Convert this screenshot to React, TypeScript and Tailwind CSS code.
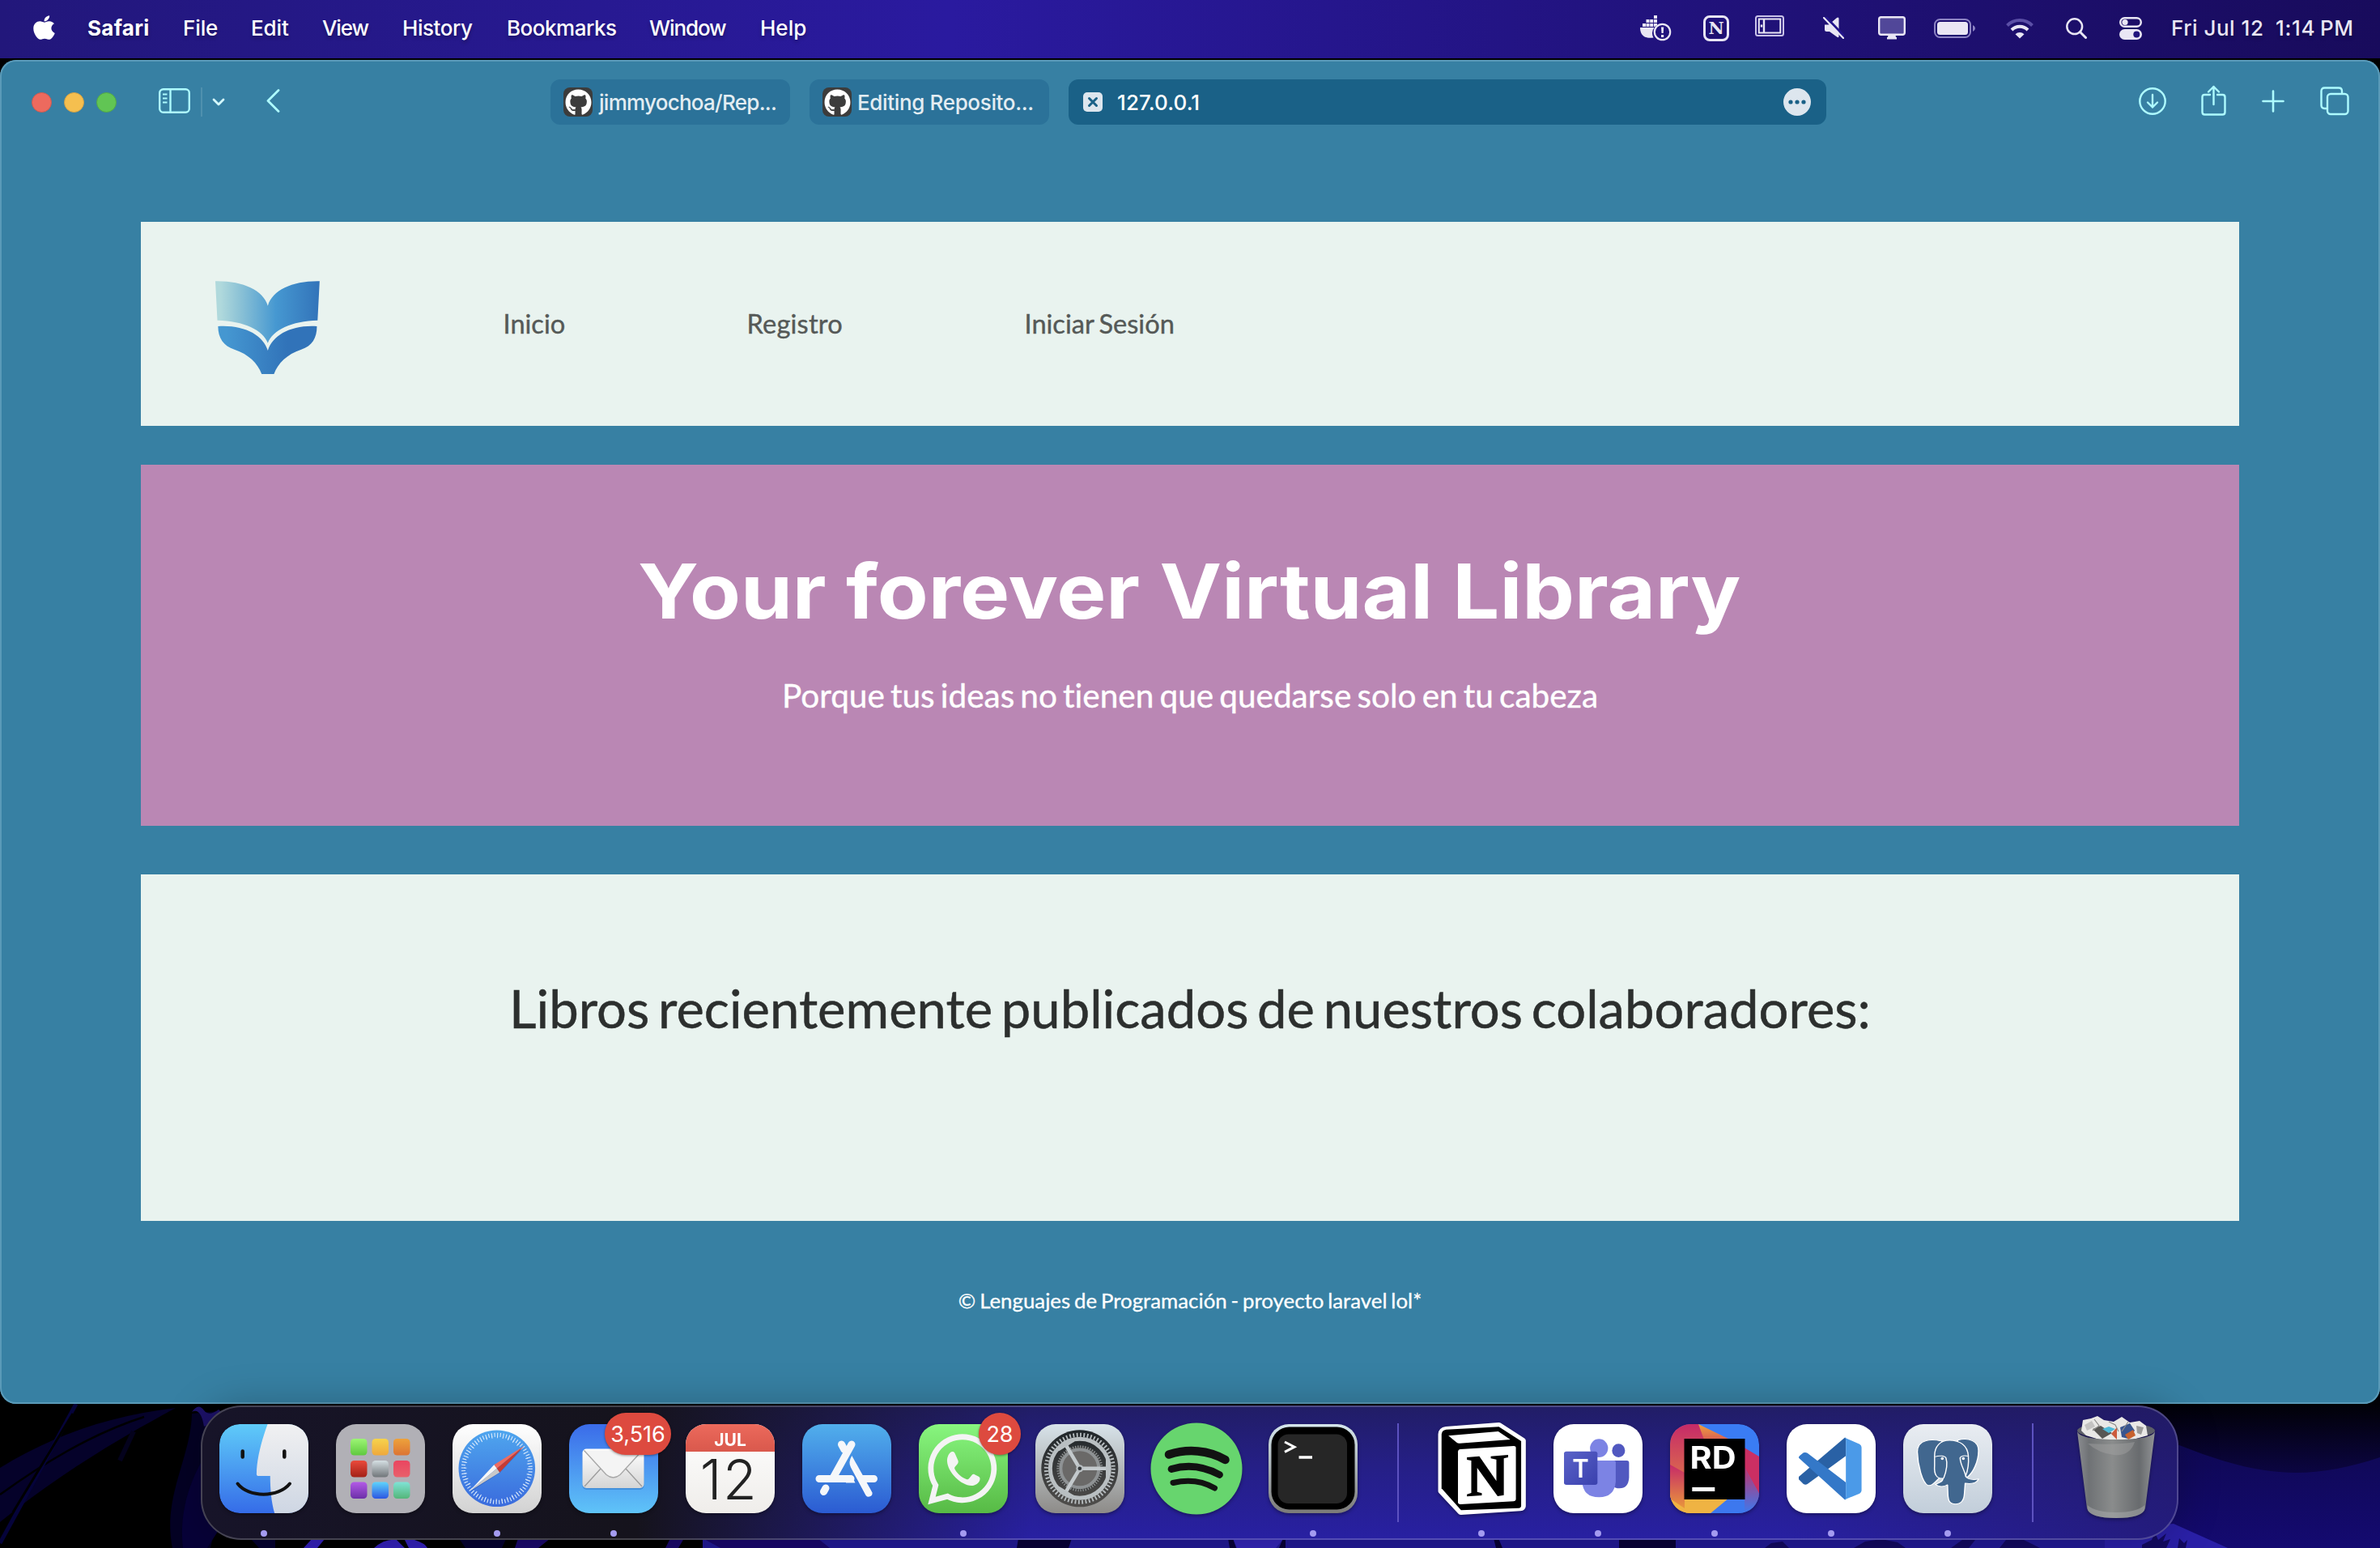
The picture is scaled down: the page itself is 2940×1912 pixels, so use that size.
import type { ReactNode } from 'react';
import { FaApple, FaGithub } from 'react-icons/fa';

/* ---------- Menu bar ---------- */

function DockerIcon() {
  return (
    <svg className="ml-0 h-[32px] w-[40px]" viewBox="0 0 40 32" fill="#e9e6f4">
      <path d="M17 0h4v4h-4zM7.500 5h4v4h-4zM12.200 5h4v4h-4zM17 5h4v4h-4zM3 10h4v4H3zM7.500 10h4v4h-4zM12.200 10h4v4h-4zM17 10h4v2l-3 2h-1z" />
      <path d="M0 15h17.500a11.500 11.500 0 0 0-1 12.500C6 29 0 25 0 15z" />
      <circle cx="27.500" cy="20.500" r="9.700" fill="none" stroke="#e9e6f4" strokeWidth="2.200" />
      <path d="M26 14.500h3.200l-.5 7.500h-2.200zM26 24h3.200v3H26z" />
    </svg>
  );
}

function NotionMark() {
  return (
    <span className="ml-[38px] flex h-[32px] w-[32px] items-center justify-center rounded-[8px] border-[3px] border-[#e9e6f4] font-['DejaVu_Serif','Liberation_Serif',serif] text-[21px] leading-[26px] font-bold text-[#e9e6f4]">
      N
    </span>
  );
}

function TabletIcon() {
  return (
    <svg className="mb-[6px] ml-[32px] h-[26px] w-[36px]" viewBox="0 0 36 26" fill="none">
      <rect x="1" y="1" width="34" height="24" rx="2.500" stroke="#c9c3e8" strokeWidth="2" />
      <rect x="4.800" y="4.500" width="26.500" height="17" stroke="#e9e6f4" strokeWidth="2" />
      <path d="M11 4v18M8 11.500v3" stroke="#e9e6f4" strokeWidth="2.400" />
    </svg>
  );
}

function MuteIcon() {
  return (
    <svg className="ml-[48px] h-[27px] w-[26px]" viewBox="0 0 26 27">
      <path d="M2 9.500h5L17 1q2.500-1.500 2.500 1v22q0 2-2.500.5L8 18H4.500Q2 18 2 15.500z" fill="#e9e6f4" />
      <path d="M2.500 -1l25 26" stroke="#23158c" strokeWidth="3" />
      <path d="M1 1l24 25" stroke="#e9e6f4" strokeWidth="2.200" strokeLinecap="round" />
    </svg>
  );
}

function DisplayIcon() {
  return (
    <svg className="ml-[42px] h-[29px] w-[34px]" viewBox="0 0 34 29">
      <rect x="1.200" y="1.200" width="31.600" height="21.500" rx="2.500" fill="#514799" stroke="#e9e6f4" strokeWidth="2.400" />
      <path d="M12.500 23h9l.5 3h1v2.500H11V26h1z" fill="#e9e6f4" />
    </svg>
  );
}

function BatteryIcon() {
  return (
    <svg className="ml-[35px] h-[24px] w-[51px]" viewBox="0 0 51 24">
      <rect x="1" y="1" width="44" height="22" rx="6.500" fill="none" stroke="#8d84c4" strokeWidth="2" />
      <rect x="4" y="4" width="38" height="16" rx="3.500" fill="#e9e6f4" />
      <path d="M48 8q3 1.500 3 4t-3 4z" fill="#8d84c4" />
    </svg>
  );
}

function WifiIcon() {
  return (
    <svg className="ml-[38px] h-[26px] w-[34px]" viewBox="0 0 34 26" fill="none">
      <path d="M1.500 9.500a22 22 0 0 1 31 0" stroke="#5b4fa6" strokeWidth="4" />
      <path d="M7 15a14 14 0 0 1 20 0" stroke="#e9e6f4" strokeWidth="4" />
      <path d="M11.500 20.200a8 8 0 0 1 11 0L17 25.500z" fill="#e9e6f4" />
    </svg>
  );
}

function SearchIcon() {
  return (
    <svg className="ml-[40px] h-[26px] w-[26px]" viewBox="0 0 26 26" fill="none" stroke="#e9e6f4">
      <circle cx="10.700" cy="10.700" r="9.400" strokeWidth="2.500" />
      <path d="M17.500 17.500l7 7" strokeWidth="3" strokeLinecap="round" />
    </svg>
  );
}

function ControlCenterIcon() {
  return (
    <svg className="ml-[40px] h-[28px] w-[28px]" viewBox="0 0 28 28">
      <rect x="1.200" y="1.200" width="25.600" height="10.600" rx="5.300" fill="none" stroke="#e9e6f4" strokeWidth="2.400" />
      <circle cx="7" cy="6.500" r="3.600" fill="#e9e6f4" />
      <rect x="0" y="15" width="28" height="13" rx="6.500" fill="#e9e6f4" />
      <circle cx="21.300" cy="21.500" r="4" fill="#20137d" />
    </svg>
  );
}

function MenuBar() {
  return (
    <header className="flex h-[72px] items-center bg-linear-to-r from-[#22177b] via-[#2a1a9f] via-40% to-[#180b5c] pb-[3px] pl-[41px] text-[26px] leading-10 font-medium whitespace-nowrap text-white text-shadow-[0_3px_4px_rgba(0,0,0,0.3)]">
      <FaApple className="mb-[2px] h-[34px] w-[27px]" preserveAspectRatio="none" />
      <span className="ml-[40px] w-[118px] font-bold tracking-[0.3px]">Safari</span>
      <span className="w-[84px] tracking-[-0.1px]">File</span>
      <span className="w-[88px] tracking-[-0.1px]">Edit</span>
      <span className="w-[99px] tracking-[-1.1px]">View</span>
      <span className="w-[129px] tracking-[-0.45px]">History</span>
      <span className="w-[176px] tracking-[-0.48px]">Bookmarks</span>
      <span className="w-[137px] tracking-[-1.1px]">Window</span>
      <span>Help</span>
      <div className="ml-auto flex items-center pr-[33px] text-[#e9e6f4]">
        <DockerIcon />
        <NotionMark />
        <TabletIcon />
        <MuteIcon />
        <DisplayIcon />
        <BatteryIcon />
        <WifiIcon />
        <SearchIcon />
        <ControlCenterIcon />
        <span className="ml-[36px] w-[129px] tracking-[0.5px]">Fri Jul 12</span>
        <span className="w-[96px] tracking-[0.7px] [word-spacing:-2px]">1:14 PM</span>
      </div>
    </header>
  );
}

/* ---------- Browser toolbar ---------- */

function Tab({ title, className }: { title: string; className: string }) {
  return (
    <div className="flex h-[56px] w-[296px] items-center rounded-[12px] bg-[#2b7299] pl-4">
      <span className="flex size-9 shrink-0 items-center justify-center rounded-[8px] bg-[#3c3c3c]">
        <FaGithub className="size-[33px] text-white" />
      </span>
      <span className={className}>{title}</span>
    </div>
  );
}

function Toolbar() {
  return (
    <div className="flex h-[104px] shrink-0 items-center text-[26px] leading-10 font-medium whitespace-nowrap text-[#e3edf2]">
      <div className="flex w-[680px] items-center pl-[39px]">
        <span className="size-[25px] rounded-full border border-[#cf5a50] bg-[#ed6a5e]" />
        <span className="ml-[15px] size-[25px] rounded-full border border-[#d3a144] bg-[#f5bf4f]" />
        <span className="ml-[15px] size-[25px] rounded-full border border-[#52a946] bg-[#61c554]" />
        <svg className="mb-[3px] ml-[52px] h-[31px] w-[39px]" viewBox="0 0 39 31" fill="none" stroke="#aefbff" strokeWidth="2.400">
          <rect x="1.200" y="1.200" width="36.600" height="28.600" rx="4.500" />
          <path d="M14.500 1v29" />
          <path d="M5 7.500h5.500M5 12.500h5.500M5 17.500h5.500" strokeWidth="2" />
        </svg>
        <span className="ml-[13px] h-9 w-[2px] bg-[#4f90ae]" />
        <svg className="ml-[12px] h-[11px] w-[16px]" viewBox="0 0 16 11" fill="none" stroke="#d5fbff" strokeWidth="2.800" strokeLinecap="round" strokeLinejoin="round">
          <path d="M2 2l6 6 6-6" />
        </svg>
        <svg className="mb-[3px] ml-[51px] h-[29px] w-[17px]" viewBox="0 0 17 29" fill="none" stroke="#aefbff" strokeWidth="2.800" strokeLinecap="round" strokeLinejoin="round">
          <path d="M15 1.500L2 14.500l13 13" />
        </svg>
      </div>
      <div className="flex gap-6">
        <Tab title="jimmyochoa/Rep..." className="mt-[2px] ml-[8px] tracking-[-0.73px]" />
        <Tab title="Editing Reposito..." className="mt-[2px] ml-[7px] tracking-[-0.35px]" />
        <div className="flex h-[56px] w-[936px] items-center rounded-[12px] bg-[#1a6187] pr-[19px] pl-[18px] text-white">
          <svg className="size-6" viewBox="0 0 24 24">
            <rect width="24" height="24" rx="5" fill="#dde6ee" />
            <path d="M7.500 7.500l9 9M16.500 7.500l-9 9" stroke="#1a6187" strokeWidth="3" strokeLinecap="round" />
          </svg>
          <span className="mt-[2px] ml-[18px] tracking-[0.1px]">127.0.0.1</span>
          <svg className="ml-auto size-[34px]" viewBox="0 0 34 34">
            <circle cx="17" cy="17" r="17" fill="#dde6ee" />
            <g fill="#1a6187">
              <circle cx="9" cy="17" r="2.600" />
              <circle cx="17" cy="17" r="2.600" />
              <circle cx="25" cy="17" r="2.600" />
            </g>
          </svg>
        </div>
      </div>
      <div className="ml-auto flex items-center pr-[38px]">
        <svg className="h-[38px] w-[34px]" viewBox="0 0 34 38" fill="none" stroke="#aefbff" strokeWidth="2.400" strokeLinecap="round" strokeLinejoin="round">
          <circle cx="17" cy="18" r="15.700" />
          <path d="M17 10v15.500M11 19.500l6 6 6-6" />
        </svg>
        <svg className="mb-[4px] ml-[43px] h-[38px] w-[31px]" viewBox="0 0 31 38" fill="none" stroke="#aefbff" strokeWidth="2.400" strokeLinecap="round" strokeLinejoin="round">
          <path d="M11 12H4.500Q1.500 12 1.500 15v18.500q0 3 3 3h22q3 0 3-3V15q0-3-3-3H20" />
          <path d="M15.500 24V2M9 8.500L15.500 2 22 8.500" />
        </svg>
        <svg className="mb-[3px] ml-[44px] size-7" viewBox="0 0 28 28" fill="none" stroke="#aefbff" strokeWidth="2.600" strokeLinecap="round">
          <path d="M14 1.500v25M1.500 14h25" />
        </svg>
        <svg className="mb-[3px] ml-[44px] h-[36px] w-[36px]" viewBox="0 0 36 36" fill="none" stroke="#aefbff" strokeWidth="2.400" strokeLinejoin="round">
          <path d="M9 27H5.500q-4 0-4-4V5.500q0-4 4-4h17.500q4 0 4 4V9" />
          <rect x="9" y="9" width="25.500" height="25" rx="4" />
        </svg>
      </div>
    </div>
  );
}

/* ---------- Web page ---------- */

function LibraryLogo() {
  return (
    <svg className="mt-[9px] ml-[92px] h-[116px] w-[130px] shrink-0" viewBox="0 0 130 116">
      <defs>
        <linearGradient id="page" x1="0" x2="1">
          <stop offset="0.050" stopColor="#b0d9dc" />
          <stop offset="0.220" stopColor="#8fc4d6" />
          <stop offset="0.580" stopColor="#4698d1" />
          <stop offset="1" stopColor="#3273b9" />
        </linearGradient>
        <linearGradient id="cover" x1="0" x2="1">
          <stop offset="0.080" stopColor="#4597d1" />
          <stop offset="0.700" stopColor="#3173b9" />
        </linearGradient>
      </defs>
      <g transform="scale(0.842 0.3333) translate(-126 -262)">
        <path fill="url(#page)" d="M126 263C165 261 196 295 203 354C210 295 240 261 279 263L276 408C238 410 210 444 203 492C196 444 168 410 129 408Z" />
        <path fill="url(#cover)" d="M130 430C168 424 196 462 203 520C210 462 238 424 275 430C275 474 268 503 252 516C231 534 218 566 212 607H194C188 566 175 534 154 516C138 503 130 474 130 430Z" />
      </g>
    </svg>
  );
}

function WebPage() {
  return (
    <div className="flex flex-col px-[174px] pt-24 font-['Lato','Open_Sans',sans-serif] [font-variant-ligatures:none]">
      <nav className="flex h-[252px] items-center bg-[#e9f3ef] text-[32.6px] leading-10 whitespace-nowrap text-[#555957] [-webkit-text-stroke:0.4px_#555957]">
        <LibraryLogo />
        <span className="ml-[225.500px] w-[301px]">Inicio</span>
        <span className="w-[343px] tracking-[0.2px]">Registro</span>
        <span className="[word-spacing:-2px]">Iniciar Sesión</span>
      </nav>
      <section className="mt-12 flex h-[446px] flex-col items-center bg-[#ba87b4] pt-24 whitespace-nowrap text-white">
        <h1 className="-ml-[2px] scale-x-[1.093] font-['Inter',sans-serif] text-[94px] leading-[120px] font-bold">Your forever Virtual Library</h1>
        <p className="mt-[45px] text-[40.5px] leading-12 [word-spacing:-3.2px] [-webkit-text-stroke:0.4px_white]">Porque tus ideas no tienen que quedarse solo en tu cabeza</p>
      </section>
      <section className="mt-[60px] flex h-[428px] justify-center bg-[#e9f3ef] pt-[125px]">
        <h2 className="text-[65.2px] leading-20 whitespace-nowrap text-[#2c2f2e] [word-spacing:-6px] [-webkit-text-stroke:0.5px_#2c2f2e]">Libros recientemente publicados de nuestros colaboradores:</h2>
      </section>
      <footer className="mt-[82px] text-center text-[25.800px] leading-8 text-white [word-spacing:-1.700px] [-webkit-text-stroke:0.3px_white]">© Lenguajes de Programación - proyecto laravel lol*</footer>
    </div>
  );
}

/* ---------- Dock ---------- */

function DockItem({ children, badge, badgeClass, running }: { children: ReactNode; badge?: string; badgeClass?: string; running?: boolean }) {
  return (
    <div className="relative flex w-36 flex-col items-center">
      <svg className="size-[110px] overflow-visible drop-shadow-[0_2px_2px_rgba(0,0,0,0.35)]" viewBox="0 0 110 110">
        {children}
      </svg>
      {badge && <span className={badgeClass}>{badge}</span>}
      {running && <span className="mt-[21px] size-2 rounded-full bg-[#a49bf0]" />}
    </div>
  );
}

function Divider() {
  return (
    <div className="flex w-16 justify-center pl-[2px]">
      <span className="-mt-[1px] h-[122px] w-[2px] bg-[#5d52c0]" />
    </div>
  );
}

function Tile({ fill }: { fill: string }) {
  return <rect width="110" height="110" rx="25" fill={fill} />;
}

function Gradient({ id, from, to, diagonal }: { id: string; from: string; to: string; diagonal?: boolean }) {
  return (
    <linearGradient id={id} x1="0" x2={diagonal ? '1' : '0'} y1="0" y2="1">
      <stop stopColor={from} />
      <stop offset="1" stopColor={to} />
    </linearGradient>
  );
}

function FinderArt() {
  return (
    <>
      <defs>
        <Gradient id="finderBlue" from="#5fcbf9" to="#356ce8" />
        <Gradient id="finderGray" from="#f1f1f2" to="#ced6e3" />
        <clipPath id="finderClip"><rect width="110" height="110" rx="25" /></clipPath>
      </defs>
      <g clipPath="url(#finderClip)">
        <Tile fill="url(#finderBlue)" />
        <g transform="scale(0.38265 0.3333) translate(-82 -87)">
          <path fill="url(#finderGray)" d="M240 80C217 150 202 220 202 272Q202 279 209 279H246C246 330 250 380 261 420H380V80Z" />
        </g>
      </g>
      <g stroke="#111" strokeWidth="4.500" strokeLinecap="round" fill="none">
        <path d="M28.700 33.500v7M80.300 33.500v7" />
        <path d="M22.500 73.500C36 91 73 91 87 73.500" strokeWidth="4" />
      </g>
    </>
  );
}

const launchpadTiles = [
  { x: 18, y: 18, c1: '#9cf574', c2: '#5fc93f' },
  { x: 44.5, y: 18, c1: '#f6d34c', c2: '#efa83c' },
  { x: 71, y: 18, c1: '#eda23b', c2: '#dc7434' },
  { x: 18, y: 45, c1: '#ea4a3b', c2: '#a32117' },
  { x: 44.5, y: 45, c1: '#d5dfe3', c2: '#71767a' },
  { x: 71, y: 45, c1: '#ea4560', c2: '#e8606b' },
  { x: 18, y: 71.5, c1: '#b25ae6', c2: '#6c2fa8' },
  { x: 44.5, y: 71.5, c1: '#5ed3fb', c2: '#2c56e2' },
  { x: 71, y: 71.5, c1: '#7fe3d6', c2: '#54b679' },
];

function LaunchpadArt() {
  return (
    <>
      <Tile fill="#b1b0b6" />
      {launchpadTiles.map((t, i) => (
        <g key={i}>
          <Gradient id={`pad${i}`} from={t.c1} to={t.c2} />
          <rect x={t.x} y={t.y} width="20.500" height="20.500" rx="4.500" fill={`url(#pad${i})`} />
        </g>
      ))}
    </>
  );
}

function SafariArt() {
  return (
    <>
      <defs>
        <Gradient id="safariTile" from="#ffffff" to="#d2d2d2" />
        <Gradient id="safariDial" from="#4fa6ee" to="#3a6bdd" />
      </defs>
      <Tile fill="url(#safariTile)" />
      <circle cx="54.800" cy="54.800" r="47.300" fill="url(#safariDial)" />
      <circle cx="54.800" cy="54.800" r="41.500" fill="none" stroke="#dcebfb" strokeWidth="5" strokeDasharray="1.100 2.522" />
      <circle cx="54.800" cy="54.800" r="39" fill="none" stroke="#dcebfb" strokeWidth="3" strokeDasharray="1 5.806" />
      <g transform="scale(0.38265 0.3333) translate(-835 -87)">
        <path d="M1068 170L987 268L892 338Z" fill="#2a4f9f" opacity="0.450" />
        <path d="M1066 168L969 238L978 251Z" fill="#ef6c60" />
        <path d="M1066 168L987 266L978 251Z" fill="#c73b33" />
        <path d="M890 335L969 238L978 251Z" fill="#f7f7f7" />
        <path d="M890 335L987 266L978 251Z" fill="#c9c9c9" />
      </g>
    </>
  );
}

function MailArt() {
  return (
    <>
      <defs>
        <Gradient id="mailTile" from="#3a6be9" to="#5fc4f8" />
        <Gradient id="envelope" from="#ffffff" to="#d5d5d5" />
      </defs>
      <Tile fill="url(#mailTile)" />
      <rect x="16.500" y="32" width="76" height="49" rx="5" fill="#123e90" opacity="0.250" />
      <rect x="16.500" y="30.500" width="76" height="48.500" rx="5" fill="url(#envelope)" />
      <path d="M19 77l20-22M90 77L70 55" stroke="#9b9b9b" strokeWidth="1.300" fill="none" />
      <path d="M18.500 32.500L46 62.500q8.500 7 17 0L90.500 32.500" fill="#f4f4f4" stroke="#a8a8a8" strokeWidth="1.400" />
    </>
  );
}

function CalendarArt() {
  return (
    <>
      <defs>
        <Gradient id="calPage" from="#ffffff" to="#efedea" />
        <Gradient id="calTop" from="#ec6a5c" to="#d9584c" />
      </defs>
      <Tile fill="url(#calPage)" />
      <path d="M0 34V25A25 25 0 0 1 25 0H85A25 25 0 0 1 110 25V34Z" fill="url(#calTop)" />
      <text x="55" y="26.500" textAnchor="middle" fontSize="21" fontWeight="700" fill="#fff">JUL</text>
      <text x="53.500" y="93" textAnchor="middle" fontSize="68" fontWeight="300" fill="#222" letterSpacing="1.500">12</text>
    </>
  );
}

function AppStoreArt() {
  return (
    <>
      <Gradient id="appTile" from="#51afec" to="#2b5bd2" />
      <Tile fill="url(#appTile)" />
      <g stroke="#f5f7fa" strokeWidth="9" strokeLinecap="round" fill="none">
        <path d="M48.500 25L52 31.500" />
        <path d="M26.500 83.500l2.500-4.500" />
        <path d="M61 25L38 66.500" />
        <path d="M21 67.500H60M74 67.500H88.500" />
      </g>
      <path d="M61.300 39C63 42 86 83 86.500 84.500A4.500 4.500 0 0 1 78.500 88L60 53.500Q56.500 47 61.300 39z" fill="#f5f7fa" />
      <path d="M54 63h6.500l5 9.500H54z" fill="#f5f7fa" />
    </>
  );
}

function WhatsAppArt() {
  return (
    <>
      <Gradient id="waTile" from="#88f67f" to="#57ba45" />
      <Tile fill="url(#waTile)" />
      <path d="M16 94.500L20.800 75.500A39 39 0 1 1 35.500 89.200Z" fill="none" stroke="#f4f4f4" strokeWidth="6.800" strokeLinejoin="miter" />
      <path d="M41 34c2 0 3 .5 4 3l3.500 8c.6 1.500.2 3-1 4.500l-2.800 3.300c-.8 1-.7 2 0 3.200 3.500 6 8 9.500 14 12 1.300.6 2.300.4 3.300-.7l3.500-4.300c1-1.200 2-1.500 3.500-.8l5 2.500c1.500.8 1.600 1.800 1.500 3.500-.6 5-6.500 8-10.500 7.800C52 75.500 36 60 35 46c-.4-5 2.500-11.500 6-12z" fill="#f4f4f4" />
    </>
  );
}

function SettingsArt() {
  return (
    <>
      <defs>
        <Gradient id="setTile" from="#d8e3ea" to="#8d8b88" />
        <Gradient id="setDark" from="#20262a" to="#504e4c" />
      </defs>
      <Tile fill="url(#setTile)" />
      <circle cx="54.800" cy="54.800" r="47.500" fill="url(#setDark)" />
      <g fill="none" stroke="#b9bfc2">
        <circle cx="54.800" cy="54.800" r="41.500" strokeWidth="5" strokeDasharray="1.800 2.545" />
        <circle cx="54.800" cy="54.800" r="36.500" strokeWidth="5" />
      </g>
      <circle cx="54.800" cy="54.800" r="28" fill="#3b3c3c" />
      <circle cx="54.800" cy="54.800" r="27" fill="none" stroke="#8e9294" strokeWidth="3" strokeDasharray="1.300 1.800" />
      <circle cx="54.800" cy="54.800" r="23.500" fill="#6a6968" stroke="#8e9294" strokeWidth="4" />
      <g stroke="#c3c9cc" strokeWidth="4.500">
        <path d="M54.800 54.800H89M54.800 54.800L37.500 25.500M54.800 54.800L37.500 84" />
      </g>
      <path d="M89 44v22M29 31l18-11M29 79l18 11" stroke="#b9bfc2" strokeWidth="4" strokeLinecap="round" />
      <circle cx="54.800" cy="54.800" r="4.500" fill="#b9bfc2" />
      <circle cx="54.800" cy="54.800" r="2.300" fill="#33383a" />
    </>
  );
}

function SpotifyArt() {
  return (
    <>
      <circle cx="55" cy="55" r="56.500" fill="#67d56e" />
      <g fill="none" stroke="#121212" strokeLinecap="round">
        <path d="M21 37.500C44 30 70 32 90.500 44" strokeWidth="10.500" />
        <path d="M24 55.500C44 49.500 64 52 83.500 62.500" strokeWidth="8.800" />
        <path d="M26 72.500C43 68.500 62 70 77.500 79" strokeWidth="7" />
      </g>
    </>
  );
}

function TerminalArt() {
  return (
    <>
      <Gradient id="termRim" from="#d5e6ed" to="#7b7a78" />
      <Tile fill="url(#termRim)" />
      <rect x="3.500" y="3.500" width="103" height="102" rx="22" fill="#000" />
      <rect x="11.500" y="12.500" width="85.500" height="85.500" rx="13" fill="#262626" />
      <path d="M20 22l12 6.200-12 6.200" fill="none" stroke="#fff" strokeWidth="3" />
      <path d="M37.500 41h16.500" stroke="#fff" strokeWidth="3.500" />
    </>
  );
}

function NotionArt() {
  return (
    <g transform="scale(0.38265 0.3333) translate(-980 -87)" strokeLinejoin="round">
      <path d="M1010 107L1180 92L1256 148V390Q1256 397 1248 398L1058 412L995 335V125Q996 109 1010 107Z" fill="#fff" stroke="#fff" strokeWidth="22" />
      <path d="M1010 107L1180 97L1252 150V390Q1252 397 1244 398L1058 406L995 325V125Q996 109 1010 107Z" fill="#000" />
      <path d="M1017 130L1178 114L1217 144L1054 158Q1048 159 1044 155Z" fill="#fff" />
      <path d="M1056 180L1228 168Q1235 168 1235 175V366Q1235 372 1228 373L1056 384Q1048 384 1048 376V190Q1048 181 1056 180Z" fill="#fff" />
      <path d="M1077 210L1117 206L1172 298V218L1154 214V206L1210 201V210L1196 214V350L1176 354L1110 249V338L1125 343V351L1077 355V347L1091 342V222L1077 219Z" fill="#000" />
    </g>
  );
}

function TeamsArt() {
  return (
    <>
      <Gradient id="teamsT" from="#5a62c8" to="#3a41ae" diagonal />
      <Tile fill="#fff" />
      <g transform="scale(0.38265 0.3333) translate(-1357 -87)">
        <ellipse cx="1567" cy="185" rx="21" ry="25" fill="#5158c0" />
        <path d="M1530 222H1594Q1601 222 1601 230V285Q1599 325 1570 325Q1556 325 1545 314Z" fill="#5158c0" />
        <ellipse cx="1504" cy="176" rx="29" ry="34" fill="#7c83e4" />
        <path d="M1450 222H1552Q1558 222 1558 230V300Q1554 358 1504 358Q1452 358 1450 300Z" fill="#7c83e4" />
        <rect x="1391" y="188" width="108" height="124" rx="8" fill="url(#teamsT)" />
      </g>
      <text x="33.500" y="66" textAnchor="middle" fontSize="31" fontWeight="600" fill="#fff">T</text>
    </>
  );
}

function RiderArt() {
  return (
    <>
      <defs>
        <clipPath id="riderClip"><rect width="110" height="110" rx="25" /></clipPath>
        <Gradient id="riderLeft" from="#c62a68" to="#e9963c" />
        <Gradient id="riderRight" from="#c92f63" to="#3c79ef" />
        <Gradient id="riderTop" from="#eea23d" to="#cf3a5f" />
      </defs>
      <g clipPath="url(#riderClip)">
        <Tile fill="#3a7cf4" />
        <path d="M0 0H35L50 20V110H0Z" fill="url(#riderLeft)" />
        <path d="M35 0L72 18V30H46Z" fill="url(#riderTop)" />
        <path d="M90 28L110 40V86L90 50Z" fill="#cb2f63" />
        <path d="M90 50L110 86V110H86Z" fill="url(#riderRight)" />
        <path d="M0 80L40 92H72L50 112H0Z" fill="#efb343" />
        <path d="M0 50L18 60V104L0 92Z" fill="url(#riderLeft)" />
        <path d="M72 92H92V108L50 110Z" fill="#3d78ee" />
      </g>
      <rect x="17.500" y="18" width="75" height="75" fill="#000" />
      <text x="24.500" y="55" fontSize="38" fontWeight="700" fill="#fff" textLength="57" lengthAdjust="spacingAndGlyphs">RD</text>
      <rect x="27.300" y="78" width="28" height="5" fill="#fff" />
    </>
  );
}

function VsCodeArt() {
  return (
    <>
      <Tile fill="#fff" />
      <g transform="scale(0.4847 0.3333) translate(-469 -87)">
        <path d="M617 137L500 282V292L512 309Q517 313 522 309L620 205V137Z" fill="#2961a5" />
        <path d="M617 367L500 212Q499 207 503 203L512 193Q517 190 522 194L620 303V367Z" fill="#3478c8" />
        <path d="M617 137L655 161Q660 165 660 173V333Q660 340 655 344L617 367Q620 362 620 355V148Q620 141 617 137Z" fill="#4b9ae8" />
      </g>
    </>
  );
}

function PostgresArt() {
  return (
    <>
      <Gradient id="pgTile" from="#e9edf2" to="#c2ceda" />
      <Tile fill="url(#pgTile)" />
      <g transform="scale(0.4847 0.3333) translate(-766 -87)" fill="#41678f" stroke="#fff" strokeWidth="3" strokeLinejoin="round">
        <path d="M905 146C935 136 958 150 958 185C958 225 945 265 930 283L905 275Z" />
        <path d="M865 150C840 142 802 140 802 190C803 240 815 305 829 314C840 318 848 300 860 284Z" />
        <path d="M846 204C846 170 860 147 884 147C910 147 930 165 932 205C934 240 930 262 925 280C930 292 945 295 958 290C955 305 940 310 924 306L922 345C921 370 913 383 899 383C885 383 881 372 880 350L879 312C868 322 855 318 848 310C858 304 866 302 868 288C852 290 844 275 846 240Z" />
        <path d="M847 208C858 202 872 204 875 212C880 235 876 262 869 288" fill="none" />
        <path d="M931 206C924 202 913 204 911 212C912 240 922 255 925 278" fill="none" />
      </g>
      <circle cx="48.300" cy="42.500" r="1.800" fill="#fff" />
      <circle cx="74.300" cy="42.500" r="1.800" fill="#fff" />
    </>
  );
}

function TrashArt() {
  return (
    <>
      <defs>
        <linearGradient id="bin" x1="0" x2="1">
          <stop stopColor="#8b8d91" />
          <stop offset="0.150" stopColor="#6f7275" />
          <stop offset="0.450" stopColor="#8a8c8c" />
          <stop offset="0.800" stopColor="#686b6e" />
          <stop offset="1" stopColor="#929496" />
        </linearGradient>
      </defs>
      <ellipse cx="55" cy="8" rx="48" ry="10" fill="#5d5f68" />
      <path d="M12 8L14 -5L24 -7L32 -10L40 -5L52 -3L62 -9L72 -2L84 -4L92 2L94 14L76 19H34L18 14Z" fill="#e9e8e6" />
      <path d="M26 6l10-4 14 9-12 7z" fill="#585754" />
      <path d="M38 6l8-3 8 3-8 5z" fill="#4fb9d8" />
      <path d="M60 4l12-5 6 9-8 10-8-2z" fill="#39558f" />
      <path d="M66 13l10-6 3 7-9 5z" fill="#c7622e" />
      <path d="M49 12l7-8v15z" fill="#cc5a3c" />
      <path d="M80 2l9 2-3 9-5-2z" fill="#9c9b9a" />
      <path d="M16 1l9-5 4 7-10 5z" fill="#c3c2c1" />
      <path d="M46 -3l8 4 4 8M70 -3l-8 12M28 -6l6 8-8 6" stroke="#8e8d8b" strokeWidth="1.200" fill="none" />
      <path d="M7 9C10 17 32 19 55 19S100 17 103 9L91 104Q88 116 55 116T19 104Z" fill="url(#bin)" />
      <path d="M19.500 100Q30 109 55 109T90.500 100L90 106Q86 116 55 116T20 106Z" fill="#aaacae" opacity="0.500" />
      <path d="M20 24Q56 26 78 22Q72 40 52 38Q34 36 20 24Z" fill="#a7a8a8" opacity="0.400" />
    </>
  );
}

const badgeBase =
  'absolute -top-[14px] flex h-[52px] items-center justify-center rounded-full bg-[#dd4a3f] text-[27px] leading-none text-white shadow-[0_1px_3px_rgba(0,0,0,0.4)]';

function Dock() {
  return (
    <div className="mt-[2px] ml-[248px] flex h-[166px] w-[2443px] rounded-[50px] border-2 border-white/20 bg-[linear-gradient(to_right,#171429_0%,#15131c_22%,rgba(21,19,28,0)_42%),linear-gradient(to_right,rgba(33,26,100,0)_80%,rgba(33,24,100,0.6)_100%),linear-gradient(to_bottom,#211d66_0%,#251f86_45%,#2820a2_100%)] bg-origin-border pt-[21px] pl-[4px] shadow-[0_0_50px_rgba(0,0,0,0.25)]">
      <DockItem running><FinderArt /></DockItem>
      <DockItem><LaunchpadArt /></DockItem>
      <DockItem running><SafariArt /></DockItem>
      <DockItem running badge="3,516" badgeClass={`${badgeBase} left-[61px] w-[82px]`}><MailArt /></DockItem>
      <DockItem><CalendarArt /></DockItem>
      <DockItem><AppStoreArt /></DockItem>
      <DockItem running badge="28" badgeClass={`${badgeBase} left-[91px] w-[52px]`}><WhatsAppArt /></DockItem>
      <DockItem><SettingsArt /></DockItem>
      <DockItem><SpotifyArt /></DockItem>
      <DockItem running><TerminalArt /></DockItem>
      <Divider />
      <DockItem running><NotionArt /></DockItem>
      <DockItem running><TeamsArt /></DockItem>
      <DockItem running><RiderArt /></DockItem>
      <DockItem running><VsCodeArt /></DockItem>
      <DockItem running><PostgresArt /></DockItem>
      <Divider />
      <DockItem><TrashArt /></DockItem>
    </div>
  );
}

/* ---------- Desktop ---------- */

function Wallpaper() {
  return (
    <svg className="absolute bottom-0 left-0 -z-10 h-[212px] w-[2940px]" viewBox="0 0 2940 212">
      <defs>
        <linearGradient id="sky" x1="0" x2="0" y1="0" y2="1">
          <stop offset="0.160" stopColor="#010106" />
          <stop offset="0.550" stopColor="#0b0540" />
          <stop offset="1" stopColor="#0b0540" />
        </linearGradient>
        <linearGradient id="hill" x1="0" x2="0" y1="0" y2="1">
          <stop offset="0" stopColor="#0e0850" />
          <stop offset="1" stopColor="#140a70" />
        </linearGradient>
      </defs>
      <rect x="2500" width="440" height="212" fill="url(#sky)" />
      <path d="M2600 60L2692 85C2790 124 2850 130 2940 100V212H2600Z" fill="url(#hill)" />
      <path d="M0 113C70 70 140 48 217 39C160 70 80 115 0 180Z" fill="#05022a" />
      <path d="M0 146C50 110 110 72 178 50" stroke="#000" strokeWidth="2.500" fill="none" />
      <path d="M94 34L0 206" stroke="#05033a" strokeWidth="5" />
      <path d="M90 46L16 168" stroke="#000" strokeWidth="3" />
      <path d="M165 68L148 104" stroke="#04021c" strokeWidth="6" />
      <path d="M237 46C236 100 200 150 213 212H260L300 40Z" fill="#040224" />
      <path d="M252 100C228 140 222 180 226 212H256L270 190Z" fill="#070238" />
      <path d="M237 44Q245 32 252 42Q258 50 270 41L280 50L252 62Q248 38 237 44Z" fill="#1c1168" />
      <path d="M300 190l20 22h20v-22zM560 190l15 22h45l10-22z" fill="#050230" />
      <path d="M375 212L395 190H410L392 212ZM462 212Q475 200 490 202L500 212ZM500 202H512Q525 206 528 212H505Z" fill="#3421ba" />
      <path d="M640 200H680L665 212H636ZM828 200H845L838 212H822Z" fill="#1b0a6c" />
      <path d="M868 190H2700V212H868Z" fill="#221a96" />
      <path d="M868 200H1010L1025 212H890Z" fill="#19076c" />
      <path d="M1258 200H1324L1320 212H1256ZM1517 200h6l4 12h-8zM1585 200h3v12h-8zM1845 200h6l5 12h-8zM2000 200h70v12h-70z" fill="#080238" />
      <path d="M1523 200H1586L1576 212H1528Z" fill="#3426b8" />
      <path d="M2685 182L2752 212H2600V190Z" fill="#2a20a8" />
      <path d="M2646 208l12-6 4-9 4 9 10-8-4 10 9-3-5 11h-30zM2690 212l2-12 6 6 4-4-2 10zM2290 212l14-8 20-3 20 4 10 7zM2180 212l8-6 14-2 8 8zM2410 212l14-10h16l-8 10zM2470 212l8-10 20-1 22 11z" fill="#130a60" />
    </svg>
  );
}

export default function App() {
  return (
    <div className="relative isolate h-[1912px] w-[2940px] overflow-hidden bg-black font-['Inter',sans-serif]">
      <Wallpaper />
      <MenuBar />
      <main className="mt-[2px] flex h-[1660px] flex-col rounded-[20px] bg-[#3780a3] shadow-[inset_0_0_0_2px_#5a9ab8]">
        <Toolbar />
        <WebPage />
      </main>
      <Dock />
    </div>
  );
}
